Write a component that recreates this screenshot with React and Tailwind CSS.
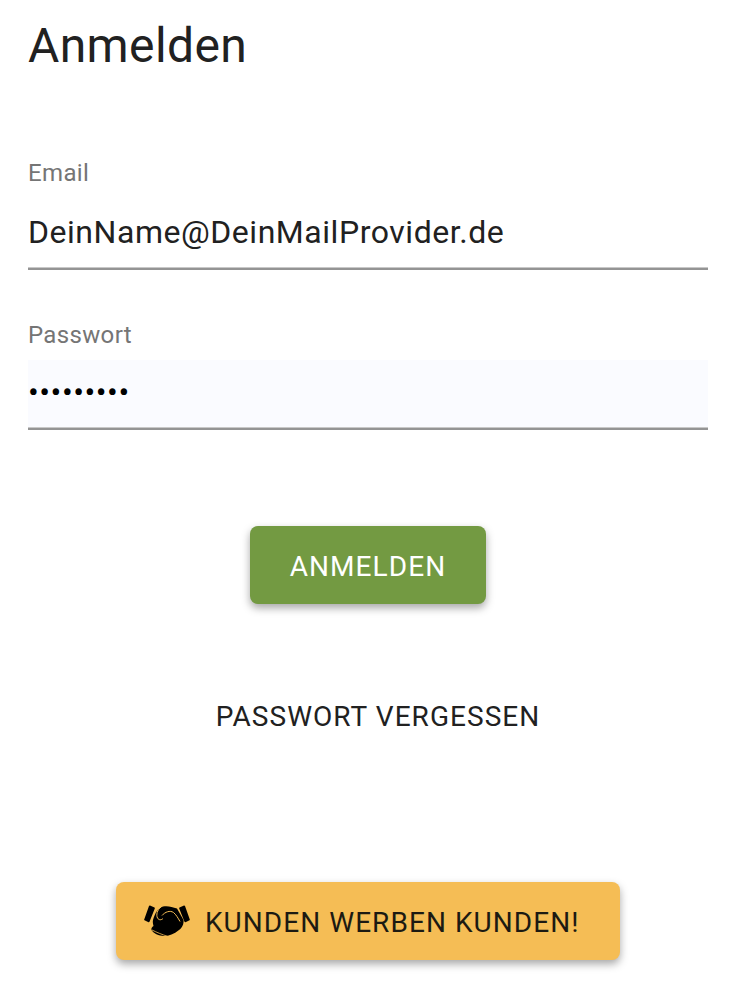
import React from "react";

function HandshakeIcon() {
	return (
		<svg width="46" height="32" viewBox="0 0 46 32" className="shrink-0">
			<path d="M6 0.5 L10.500 2.500 Q11 3 10.800 3.500 L5.500 16.800 Q5 17.500 4.500 17.200 L0.500 15.300 Q0 15 0.200 14.500 L5 1 Q5.400 0.300 6 0.500 Z" fill="#000" />
			<path d="M40 0.500 L35.500 2.500 Q35 3 35.200 3.500 L40.500 16.800 Q41 17.500 41.500 17.200 L45.500 15.300 Q46 15 45.800 14.500 L41 1 Q40.600 0.300 40 0.500 Z" fill="#000" />
			<path
				d="M9 15 C11 8 14 3 19 1.500 C24 0.500 28 2 33 3.500 L39.500 15 C40 19 38 23 35 25 C30 29 25 31 20 31 C15 31 9 28 7.500 25 C7 23 8 22 9.500 21 C9 19 8.500 17 9 15 Z"
				fill="#000"
			/>
			<path d="M17 2 C13 5 12 10 13.500 13 C15 15.500 17.500 15 19 13.500" stroke="#f5bd55" strokeWidth="1" fill="none" />
			<path d="M18 10.500 C21 7 26 5 29.500 7.500 C32 9.500 34 13 36 16.500" stroke="#f5bd55" strokeWidth="1" fill="none" />
			<path d="M8 25 C13 27.500 18 29.500 24 31.500" stroke="#f5bd55" strokeWidth="0.800" fill="none" />
		</svg>
	);
}

function Field({ label, value, filled, valueClass, boxClass }) {
	return (
		<div className="flex flex-col">
			<label className="text-[24px] leading-[28px] tracking-[0.35px] text-[#757575]">{label}</label>
			<div
				className={`h-[70px] pb-[4px] flex items-center border-b-2 border-[#949494] shadow-[inset_0_-1px_0_#c8c8c8] ${boxClass} ${
					filled ? "bg-[#fafbff]" : ""
				}`}
			>
				<span className={valueClass}>{value}</span>
			</div>
		</div>
	);
}

export default function App() {
	return (
		<div className="h-[998px] overflow-hidden bg-white pl-[28px] pr-[30px] text-[#212121] font-['Roboto',sans-serif]">
			<h1 className="pt-[18px] text-[48px] leading-[56px] tracking-[0.4px] font-normal">Anmelden</h1>

			<div className="mt-[85px] flex flex-col gap-[51px]">
				<Field
					label="Email"
					value="DeinName@DeinMailProvider.de"
					boxClass="mt-[13px]"
					valueClass="text-[32px] leading-[40px] tracking-[0.54px] text-[#212121]"
				/>
				<Field
					label="Passwort"
					value="•••••••••"
					filled
					boxClass="mt-[11px]"
					valueClass="text-[32px] leading-[40px] tracking-[0.5px] text-black"
				/>
			</div>

			<div className="mt-[96px] flex justify-center">
				<button
					type="button"
					className="w-[236px] h-[78px] pt-[3px] rounded-[8px] bg-[#739a42] text-white text-[28px] tracking-[1.1px] shadow-[0_4px_8px_rgba(0,0,0,0.35)]"
				>
					ANMELDEN
				</button>
			</div>

			<div className="mt-[97px] ml-[20px] flex justify-center text-[28px] leading-[32px] tracking-[1.05px]">
				PASSWORT VERGESSEN
			</div>

			<div className="mt-[149px] flex justify-center">
				<button
					type="button"
					className="w-[504px] h-[78px] rounded-[8px] bg-[#f5bd55] text-[#1c1a12] text-[28px] tracking-[1.05px] shadow-[0_4px_8px_rgba(0,0,0,0.35)] flex items-center pl-[28px] gap-[15px]"
				>
					<HandshakeIcon />
					<span className="pt-[3px]">KUNDEN WERBEN KUNDEN!</span>
				</button>
			</div>
		</div>
	);
}
